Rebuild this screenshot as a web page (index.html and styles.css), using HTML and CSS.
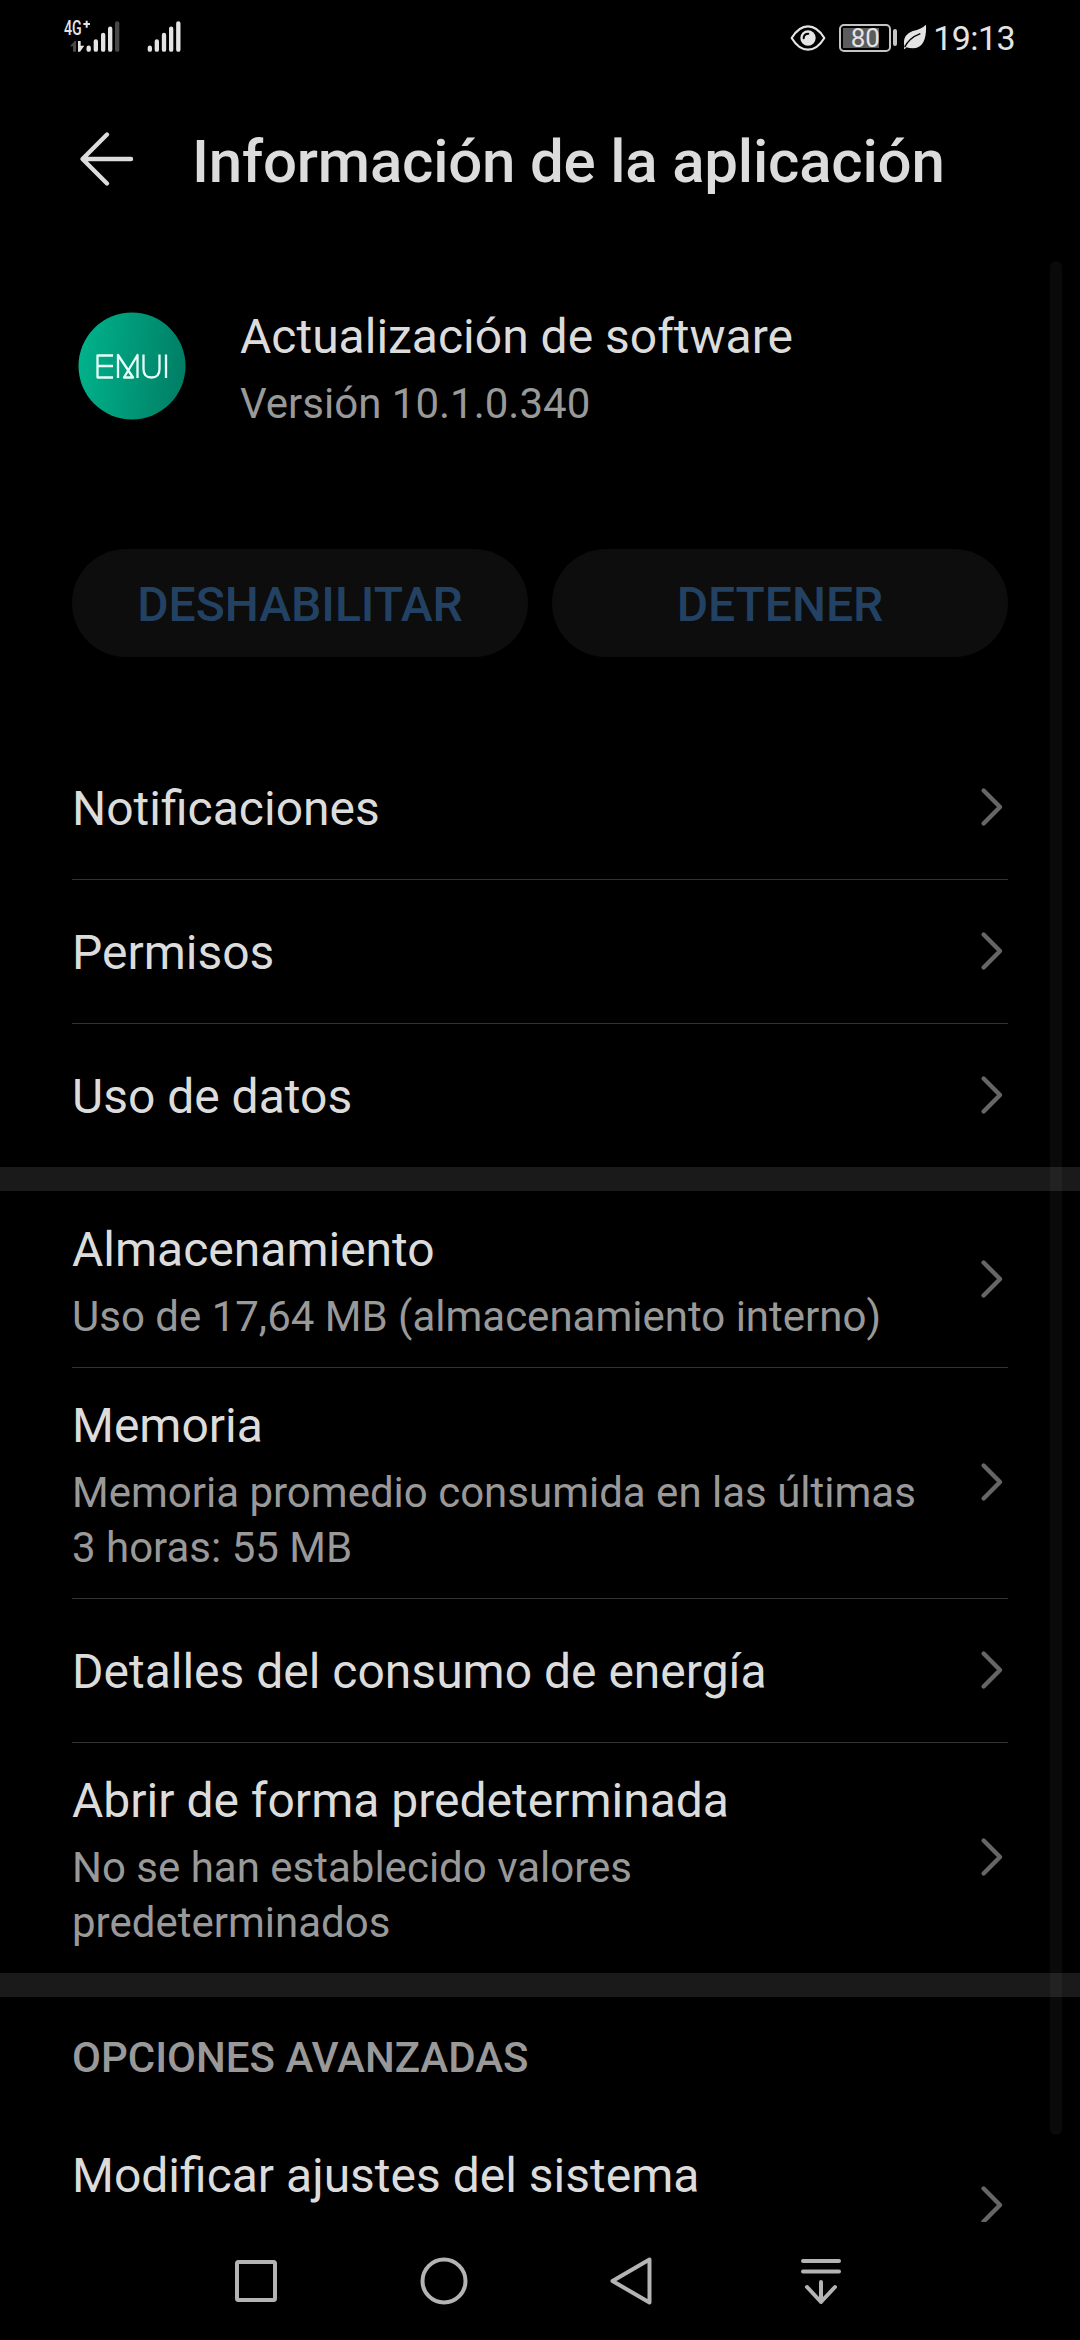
FILE: index.html
```html
<!DOCTYPE html>
<html lang="es">
<head>
<meta charset="UTF-8">
<meta name="viewport" content="width=device-width, initial-scale=1.0">
<title>Información de la aplicación</title>
<link rel="stylesheet" href="styles.css">
</head>
<body>
<svg class="sprite" width="0" height="0">
  <symbol id="chevron" viewBox="0 0 24 42">
    <path d="M3.6 4.5 20 21 3.6 37.5" fill="none" stroke="#666" stroke-width="4.4" stroke-linecap="round" stroke-linejoin="round"/>
  </symbol>
</svg>

<!-- Barra de estado -->
<div class="status">
  <svg class="signals" width="120" height="46" viewBox="0 -30 360 138">
    <text class="net" x="0" y="45" textLength="53" lengthAdjust="spacingAndGlyphs">4G</text>
    <path d="M68 2v21M58 12h20" stroke="#e4e4e4" stroke-width="6"/>
    <path d="M36 95V63h-4L18 79h9v16z" fill="#484848"/>
    <path d="M42 63h8v14h11L48 95h-6z" fill="#e4e4e4"/>
    <g stroke="#e4e4e4" stroke-width="13" stroke-linecap="round">
      <path d="M74 83v6M95.500 64v25M117.500 45v44M138.500 26v63"/>
      <path d="M257.500 83v6M278.500 64v25M300 45v44M321.500 26v63M343 10v79"/>
      <path d="M159.500 10v79" stroke="#484848"/>
    </g>
  </svg>
  <div class="status-right">
    <svg class="eye" width="36" height="28" viewBox="0 0 108 84">
      <path d="M5 42Q26 7 54 7t49 35Q82 77 54 77T5 42z" fill="none" stroke="#e4e4e4" stroke-width="6.500" stroke-linejoin="round"/>
      <circle cx="54" cy="42" r="23" fill="#e4e4e4"/>
      <path d="M41 43Q41 29 55 29" fill="none" stroke="#000" stroke-width="6" stroke-linecap="round"/>
    </svg>
    <div class="battery"><div class="level"></div><span>80</span></div>
    <div class="battery-tip"></div>
    <svg class="leaf" width="24" height="26" viewBox="0 0 72 78">
      <path d="M69 2C71 40 62 73 29 73q-12 0-18-3L4 76Q2 74 4 66-3 34 29 21 56 15 69 2z" fill="#e4e4e4"/>
      <path d="M5 70Q18 42 52 29" fill="none" stroke="#000" stroke-width="4"/>
    </svg>
    <span class="clock">19:13</span>
  </div>
</div>

<!-- Cabecera -->
<header class="header">
  <svg class="back" width="56" height="56" viewBox="0 0 56 56">
    <path d="M52 28H4M28 3.500 3.500 28 28 52.500" fill="none" stroke="#dcdcdc" stroke-width="4.400" stroke-linecap="round" stroke-linejoin="round"/>
  </svg>
  <h1>Información de la aplicación</h1>
</header>

<main class="content">
  <div class="app">
    <svg class="logo" width="108" height="108" viewBox="0 0 108 108">
      <defs>
        <linearGradient id="green" x1="0" y1="0.450" x2="1" y2="0.550">
          <stop offset="0" stop-color="#00b28b"/>
          <stop offset="1" stop-color="#007e65"/>
        </linearGradient>
      </defs>
      <circle cx="54" cy="54" r="53.500" fill="url(#green)"/>
      <g fill="none" stroke="#e6fff9" stroke-width="2.300" stroke-linejoin="round">
        <path d="M35 43.500H19.500V65.500H35M19.500 54H35"/>
        <path d="M40 66V43L55 65.500H46L59.500 43V66"/>
        <path d="M65.500 42.500V57q0 8.500 8 8.500t8-8.500V42.500M88 42.500V66"/>
      </g>
    </svg>
    <div class="app-text">
      <div class="title">Actualización de software</div>
      <div class="sub">Versión 10.1.0.340</div>
    </div>
  </div>

  <div class="buttons">
    <button>DESHABILITAR</button>
    <button>DETENER</button>
  </div>

  <section class="list">
    <div class="row"><div class="title">Notificaciones</div><svg class="chev"><use href="#chevron"/></svg></div>
    <div class="row"><div class="title">Permisos</div><svg class="chev"><use href="#chevron"/></svg></div>
    <div class="row"><div class="title">Uso de datos</div><svg class="chev"><use href="#chevron"/></svg></div>
  </section>

  <section class="list band">
    <div class="row">
      <div>
        <div class="title">Almacenamiento</div>
        <div class="sub">Uso de 17,64 MB (almacenamiento interno)</div>
      </div>
      <svg class="chev"><use href="#chevron"/></svg>
    </div>
    <div class="row tall">
      <div>
        <div class="title">Memoria</div>
        <div class="sub">Memoria promedio consumida en las últimas<br>3 horas: 55 MB</div>
      </div>
      <svg class="chev"><use href="#chevron"/></svg>
    </div>
    <div class="row"><div class="title">Detalles del consumo de energía</div><svg class="chev"><use href="#chevron"/></svg></div>
    <div class="row tall">
      <div>
        <div class="title">Abrir de forma predeterminada</div>
        <div class="sub">No se han establecido valores<br>predeterminados</div>
      </div>
      <svg class="chev"><use href="#chevron"/></svg>
    </div>
  </section>

  <section class="list band">
    <h2>OPCIONES AVANZADAS</h2>
    <div class="row last">
      <div class="title">Modificar ajustes del sistema</div>
      <svg class="chev"><use href="#chevron"/></svg>
    </div>
  </section>
</main>
<div class="scrollbar"></div>

<!-- Navegación del sistema -->
<nav class="nav">
  <svg viewBox="0 0 56 56"><rect x="9" y="9" width="38" height="38" rx="1.500"/></svg>
  <svg viewBox="0 0 56 56"><circle cx="28" cy="28" r="21.500"/></svg>
  <svg viewBox="0 0 56 56"><path d="M45.500 6.500v43L8.500 28z"/></svg>
  <svg viewBox="0 0 56 56"><path d="M11 8h36M11 18.500h36M29 29v20M15 34l14 15 14-15"/></svg>
</nav>
</body>
</html>
```
FILE: styles.css
```css
* {
  box-sizing: border-box;
}
body {
  margin: 0;
  width: 1080px;
  height: 2340px;
  overflow: hidden;
  background: #000;
  color: #dcdcdc;
  font-family: Roboto, sans-serif;
  display: flex;
  flex-direction: column;
}
.sprite {
  position: absolute;
}

/* Barra de estado */
.status {
  height: 80px;
  flex: none;
  display: flex;
  justify-content: space-between;
  padding: 0 65px 0 64px;
}
.signals {
  margin-top: 10px;
}
.net {
  font: 500 58px Roboto, sans-serif;
  fill: #e4e4e4;
}
.status-right {
  display: flex;
  align-items: center;
  height: 75px;
  color: #e4e4e4;
}
.battery {
  width: 52px;
  height: 28px;
  margin-left: 13px;
  border: 2px solid #c4c4c4;
  border-radius: 5px;
  padding: 2px;
  display: grid;
}
.battery .level,
.battery span {
  grid-area: 1 / 1;
}
.level {
  width: 36px;
  height: 20px;
  background: #5c5c5c;
}
.battery span {
  font-size: 26px;
  line-height: 20px;
  text-align: center;
  width: 44px;
}
.battery-tip {
  width: 4px;
  height: 17px;
  margin-left: 2px;
  border-radius: 2px;
  background: #c4c4c4;
}
.leaf {
  margin: -2px 0 0 6px;
}
.clock {
  font-size: 34px;
  line-height: 40px;
  letter-spacing: -0.6px;
  margin-left: 6px;
}

/* Cabecera */
.header {
  height: 160px;
  flex: none;
  display: flex;
  align-items: center;
  padding-left: 79px;
}
.back {
  margin-top: -2px;
}
h1 {
  margin: 4px 0 0 57px;
  font-size: 60px;
  line-height: 70px;
  font-weight: 500;
  letter-spacing: -0.2px;
}

.content {
  height: 1982px;
  flex: none;
  overflow: hidden;
}
.title {
  font-size: 48px;
  line-height: 58px;
}
.sub {
  margin-top: 10px;
  font-size: 42px;
  line-height: 55px;
  color: #999;
}
.app {
  display: flex;
  align-items: flex-start;
  padding: 68px 0 0 78px;
}
.logo {
  margin-top: 4px;
}
.app-text {
  margin-left: 54px;
}
.buttons {
  display: grid;
  grid-template-columns: 1fr 1fr;
  gap: 24px;
  margin-top: 118px;
  padding: 0 72px;
}
button {
  height: 108px;
  border: none;
  border-radius: 54px;
  padding: 2px 0 0;
  background: #0d0d0d;
  color: #234263;
  font: 500 48px Roboto, sans-serif;
}

/* Lista de opciones */
.list {
  padding: 0 72px;
}
.buttons + .list {
  margin-top: 78px;
}
.band {
  border-top: 24px solid #1a1a1a;
}
.row {
  min-height: 144px;
  display: flex;
  align-items: center;
  justify-content: space-between;
  padding: 30px 4px 23px 0;
}
.row > .title {
  margin-top: -4px;
}
.row + .row {
  border-top: 1px solid #333;
  padding-top: 29px;
}
.chev {
  flex: none;
  width: 24px;
  height: 42px;
  margin-top: -7px;
}
.tall .chev {
  margin-top: -8px;
}
h2 {
  margin: 0;
  height: 120px;
  line-height: 122px;
  font-size: 42px;
  font-weight: 500;
  color: #999;
}
.last {
  height: 176px;
  align-items: flex-start;
}
.last .title {
  margin-top: 0;
}
.last .chev {
  margin-top: 37px;
}
.scrollbar {
  position: absolute;
  left: 1050px;
  top: 261px;
  width: 12px;
  height: 1874px;
  border-radius: 6px;
  background: rgba(255, 255, 255, 0.04);
}

/* Navegación */
.nav {
  height: 118px;
  flex: none;
  display: flex;
  gap: 132px;
  padding: 31px 0 0 228px;
}
.nav svg {
  width: 56px;
  height: 56px;
  fill: none;
  stroke: #b4b4b4;
  stroke-width: 4;
  stroke-linecap: round;
  stroke-linejoin: round;
}
```
